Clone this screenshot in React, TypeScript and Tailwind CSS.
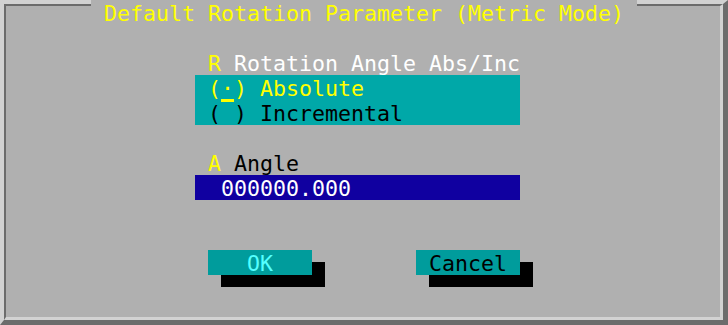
import React from "react";

const Row: React.FC<{ className?: string; children?: React.ReactNode }> = ({
  className = "",
  children,
}) => (
  <div className={`h-[25px] pt-px whitespace-pre ${className}`}>{children}</div>
);

const Button: React.FC<{ label: string; textColor: string }> = ({
  label,
  textColor,
}) => (
  <div className="relative w-[104px] h-[25px]">
    <div className="absolute left-[13px] top-[12px] w-[104px] h-[25px] bg-black" />
    <div
      className={`relative w-[104px] h-[25px] pt-px bg-[#009c9c] text-center whitespace-pre ${textColor}`}
    >
      {label}
    </div>
  </div>
);

export default function App() {
  return (
    <div className="relative w-[728px] h-[325px] bg-[#b0b0b0] font-['DejaVu_Sans_Mono',monospace] text-[21.6px] leading-[25px] overflow-hidden">
      <div className="h-full border-t-4 border-l-4 border-r-[5px] border-b-[5px] border-t-[#d2d2d2] border-l-[#d2d2d2] border-r-[#6c6c6c] border-b-[#6c6c6c]">
        <div className="h-full border-t-2 border-l-2 border-r-[3px] border-b-[3px] border-t-[#6c6c6c] border-l-[#6c6c6c] border-r-[#d2d2d2] border-b-[#d2d2d2]">
          <div className="ml-[189px] mt-[44px] w-[325px] flex flex-col">
            <Row className="pl-[13px]">
              <span className="text-[#ffff00]">R</span>
              <span className="text-white"> Rotation Angle Abs/Inc</span>
            </Row>
            <div className="bg-[#00a8a8] pl-[13px]">
              <Row className="text-[#ffff00]">
                (
                <span className="underline decoration-[3px] underline-offset-[3px]">·</span>
                ) Absolute
              </Row>
              <Row className="text-black">( ) Incremental</Row>
            </div>
            <Row />
            <Row className="pl-[13px]">
              <span className="text-[#ffff00]">A</span>
              <span className="text-black"> Angle</span>
            </Row>
            <Row className="bg-[#1000a0] pl-[26px] text-white">000000.000</Row>
            <Row />
            <Row />
            <div className="flex pl-[13px] gap-[104px]">
              <Button label="OK" textColor="text-[#55ffff]" />
              <Button label="Cancel" textColor="text-black" />
            </div>
          </div>
        </div>
      </div>
      <div className="absolute left-[91px] top-0 h-[25px] pt-px bg-[#b0b0b0] text-[#ffff00] whitespace-pre">
        {" Default Rotation Parameter (Metric Mode) "}
      </div>
    </div>
  );
}
